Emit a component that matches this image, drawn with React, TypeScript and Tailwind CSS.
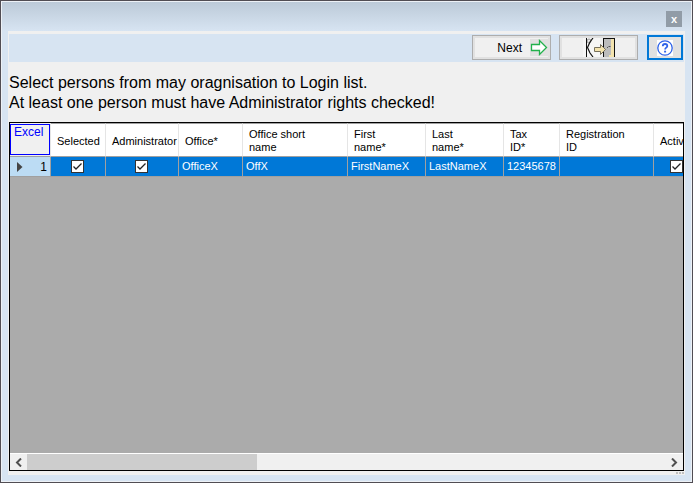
import type { ReactNode } from "react";

type Column = { label: string; width: string; value: string | boolean };

const columns: Column[] = [
  { label: "Selected", width: "w-[55px]", value: true },
  { label: "Administrator", width: "w-[73px]", value: true },
  { label: "Office*", width: "w-[64px]", value: "OfficeX" },
  { label: "Office short\nname", width: "w-[105px]", value: "OffX" },
  { label: "First\nname*", width: "w-[78px]", value: "FirstNameX" },
  { label: "Last\nname*", width: "w-[78px]", value: "LastNameX" },
  { label: "Tax\nID*", width: "w-[56px]", value: "12345678" },
  { label: "Registration\nID", width: "w-[94px]", value: "" },
  { label: "Activ", width: "w-[46px]", value: true },
];

function ToolButton({ label, children }: { label: string; children: ReactNode }) {
  return (
    <button
      type="button"
      aria-label={label}
      className="flex h-[25px] w-[79px] items-center border border-[#adadad] bg-[#e1e1e1] p-px"
    >
      <span className="flex h-full w-full items-center justify-end border border-[#e1e1e1] bg-[#f0f0f0]">{children}</span>
    </button>
  );
}

function ArrowIcon() {
  return (
    <svg width="18" height="17" viewBox="0 0 18 17" className="ml-2 bg-[#e1e1e1]" aria-hidden="true">
      <path d="M1.5 5.5h8V1.5L16.5 8.5L9.5 15.5V11.5H1.5Z" fill="#fff" stroke="#22b14c" strokeWidth="1.3" />
    </svg>
  );
}

function ExitIcon() {
  return (
    <svg width="32" height="19" viewBox="0 0 32 19" aria-hidden="true">
      <path d="M0 0h17v19H0z" fill="#f6f6f6" />
      <circle cx="6" cy="3" r="2" fill="#e8e8e8" stroke="#999" />
      <path d="M3.500 0V19" stroke="#111" />
      <path d="M10 0L7 4L4.500 9.500L7 15L10 19" stroke="#111" strokeWidth="1.200" fill="none" />
      <path d="M20 0h12v19H20z" fill="#111" />
      <path d="M21 1h7v18h-7z" fill="#bcbcbc" />
      <path d="M28 1h3v18h-5v-2h2z" fill="#f3e3ae" />
      <path d="M24 10l1-1M25.500 8.500h2" stroke="#555" fill="none" />
      <path d="M11.500 9.500h6v-3l5 5l-5 5v-3h-6z" fill="#f3e3ae" stroke="#77705c" />
    </svg>
  );
}

function HelpIcon() {
  return (
    <svg width="16" height="16" viewBox="0 0 16 16" className="bg-white" aria-hidden="true">
      <circle cx="8" cy="8" r="7.200" fill="#fff" stroke="#2f63e8" strokeWidth="1.300" />
      <path d="M5.800 6.200C5.800 3.200 10.300 3.400 10.300 6C10.300 7.700 8.100 7.600 8.100 9.500" fill="none" stroke="#2f63e8" strokeWidth="1.800" />
      <path d="M7.100 10.700h2v1.800h-2z" fill="#2f63e8" />
    </svg>
  );
}

function Tick({ label }: { label: string }) {
  return (
    <span className="relative mx-auto block size-[13px]">
      <input
        type="checkbox"
        defaultChecked
        aria-label={label}
        className="peer block size-[13px] appearance-none border border-[#333] bg-white"
      />
      <svg
        viewBox="0 0 13 13"
        className="pointer-events-none absolute inset-0 hidden size-[13px] peer-checked:block"
        aria-hidden="true"
      >
        <path d="M2.500 6.500L5 9L10.500 3.500" fill="none" stroke="#222" strokeWidth="1.300" />
      </svg>
    </span>
  );
}

function Chevron({ d }: { d: string }) {
  return (
    <svg width="7" height="9" viewBox="0 0 7 9" aria-hidden="true">
      <path d={d} fill="none" stroke="#505050" strokeWidth="2" />
    </svg>
  );
}

export default function App() {
  return (
    <div className="h-screen w-full overflow-hidden border border-[#514d53] font-['Liberation_Sans',Arial,sans-serif] text-black">
      <div className="flex h-full flex-col border border-[#edf1f6] bg-[#d7e4f2] px-[6px] pb-[6px]">
        <header className="-mx-[6px] flex h-[29px] shrink-0 items-start justify-end bg-linear-to-b from-[#bccad8] to-[#d7e4f2] px-[9px] pt-[9px]">
          <button
            type="button"
            aria-label="Close"
            className="flex h-4 w-4 items-center justify-center bg-[#919ca7] pb-px text-[11px] leading-4 font-bold text-white"
          >
            x
          </button>
        </header>

        <main className="flex min-h-0 grow flex-col bg-[#f0f0f0] pt-[3px] pr-px pl-px">
          <div className="flex h-7 shrink-0 items-start justify-end bg-[#d7e4f2] pt-px pr-px" role="toolbar">
            <div className="flex gap-2">
              <ToolButton label="Next">
                <span className="text-xs">Next</span>
                <ArrowIcon />
              </ToolButton>
              <ToolButton label="Exit">
                <span className="flex grow justify-center">
                  <ExitIcon />
                </span>
              </ToolButton>
              <button
                type="button"
                aria-label="Help"
                className="ml-px flex h-[25px] w-9 items-center justify-center border-2 border-[#0078d7] bg-[#e1e1e1]"
              >
                <HelpIcon />
              </button>
            </div>
          </div>

          <p className="shrink-0 pt-[11px] pb-[9px] text-base leading-5">
            Select persons from may oragnisation to Login list.
            <br />
            At least one person must have Administrator rights checked!
          </p>

          <section className="flex min-h-0 grow flex-col border border-black bg-[#ababab]">
            <div className="min-h-0 grow overflow-hidden">
              <table className="w-[690px] table-fixed border-separate border-spacing-0 text-[11px] leading-[13px]">
                <thead>
                  <tr className="h-[34px] bg-white">
                    <th scope="col" className="w-[41px] border-r border-b border-[#a0a0a0] border-r-[#e5e5e5] bg-[#f0f0f0] p-0 align-top font-normal">
                      <div className="mt-px h-[31px] border border-[#0000ff] pt-px pl-[3px] text-left text-xs leading-[13px] text-[#0000ff]">
                        Excel
                      </div>
                    </th>
                    {columns.map((c) => (
                      <th
                        key={c.label}
                        scope="col"
                        className={`overflow-hidden border-t border-r border-b border-t-[#a0a0a0] border-r-[#e5e5e5] border-b-[#a0a0a0] p-0 pt-[2px] pl-[6px] text-left font-normal whitespace-pre ${c.width}`}
                      >
                        {c.label}
                      </th>
                    ))}
                  </tr>
                </thead>
                <tbody>
                  <tr className="h-5 bg-[#0078d7] text-white">
                    <th scope="row" className="border-r border-b border-[#a0a0a0] bg-[#bcdcf4] p-0 text-xs font-normal text-black">
                      <div className="flex items-center justify-between pr-[3px] pl-[7px]">
                        <svg width="6" height="10" viewBox="0 0 6 10" aria-hidden="true">
                          <path d="M0 0L5.500 5L0 10Z" fill="#444" />
                        </svg>
                        1
                      </div>
                    </th>
                    {columns.map((c) => (
                      <td key={c.label} className="border-r border-b border-[#a0a0a0] p-0 pr-px">
                        {c.value === true ? <Tick label={c.label} /> : <span className="pl-[3px]">{c.value}</span>}
                      </td>
                    ))}
                  </tr>
                </tbody>
              </table>
            </div>

            <div className="flex h-[17px] shrink-0 border-t border-white bg-[#f0f0f0]">
              <button type="button" aria-label="Scroll left" className="flex w-[17px] shrink-0 items-center justify-center">
                <Chevron d="M6 0.500L2 4.500L6 8.500" />
              </button>
              <div className="flex grow">
                <div className="w-[36%] bg-[#cdcdcd]" />
              </div>
              <button type="button" aria-label="Scroll right" className="flex w-[17px] shrink-0 items-center justify-center">
                <Chevron d="M1 0.500L5 4.500L1 8.500" />
              </button>
            </div>
          </section>
          <div className="flex h-1 shrink-0 items-start justify-end gap-px pt-px">
            <span className="size-[2px] bg-[#bfbfbf]" />
            <span className="size-[2px] bg-[#bfbfbf]" />
            <span className="size-[2px] bg-[#bfbfbf]" />
          </div>
        </main>
      </div>
    </div>
  );
}
